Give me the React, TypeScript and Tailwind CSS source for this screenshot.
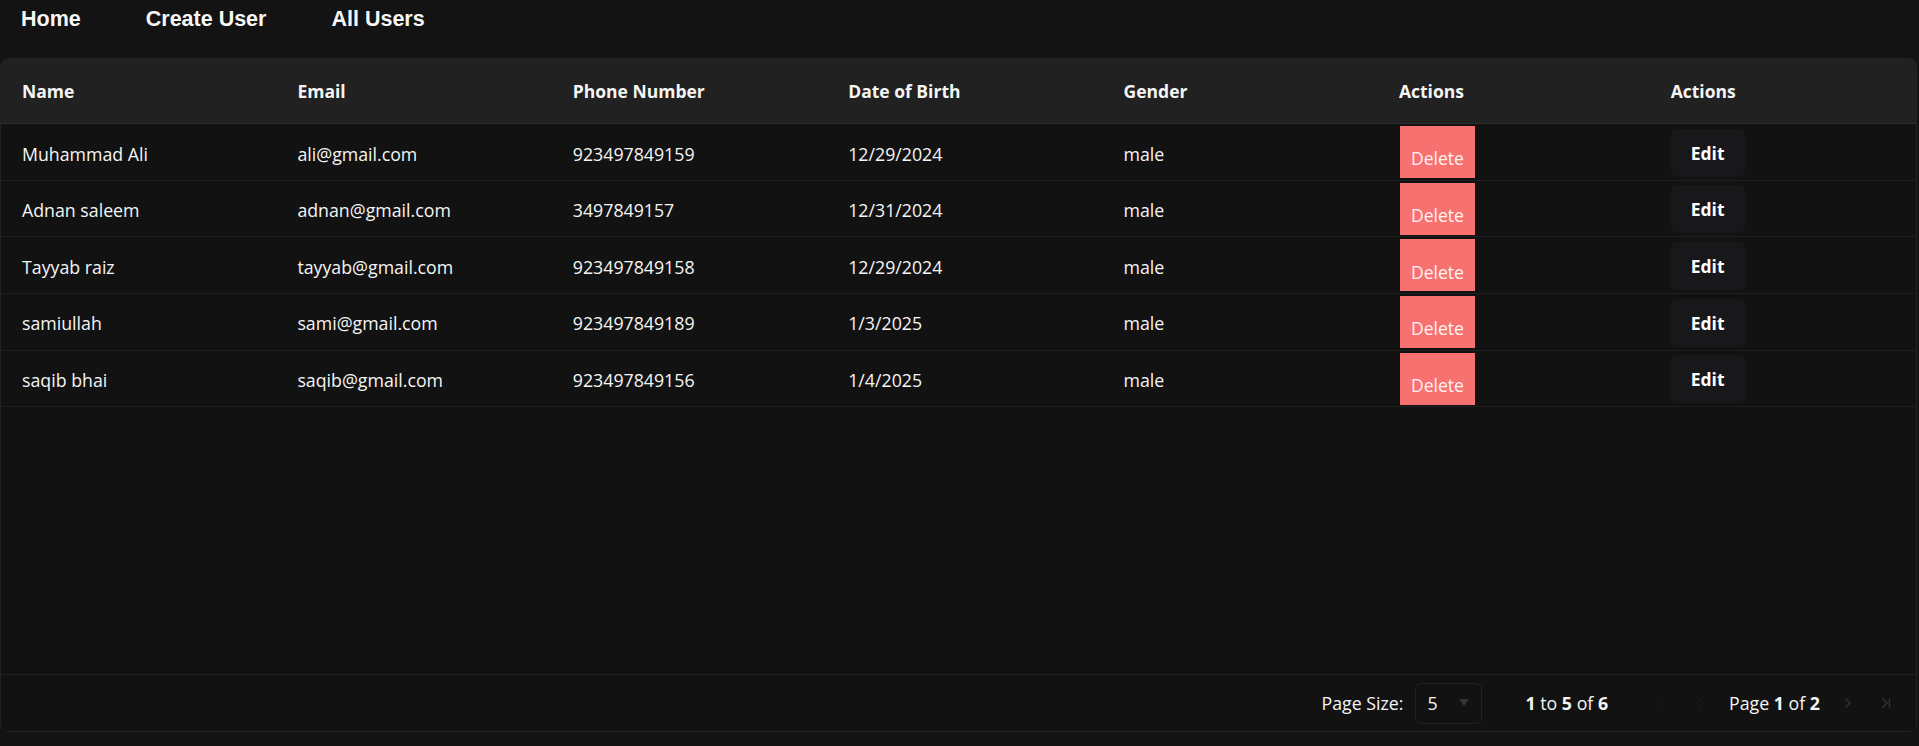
import React from "react";

interface User {
  name: string;
  email: string;
  phone: string;
  dob: string;
  gender: string;
}

const users: User[] = [
  { name: "Muhammad Ali", email: "ali@gmail.com", phone: "923497849159", dob: "12/29/2024", gender: "male" },
  { name: "Adnan saleem", email: "adnan@gmail.com", phone: "3497849157", dob: "12/31/2024", gender: "male" },
  { name: "Tayyab raiz", email: "tayyab@gmail.com", phone: "923497849158", dob: "12/29/2024", gender: "male" },
  { name: "samiullah", email: "sami@gmail.com", phone: "923497849189", dob: "1/3/2025", gender: "male" },
  { name: "saqib bhai", email: "saqib@gmail.com", phone: "923497849156", dob: "1/4/2025", gender: "male" },
];

const headers = ["Name", "Email", "Phone Number", "Date of Birth", "Gender", "Actions", "Actions"];

const cols = "grid grid-cols-[275.4px_275.4px_275.4px_275.4px_275.4px_271.7px_1fr]";

const Chevron = ({ dir, bar, color }: { dir: "left" | "right"; bar?: boolean; color: string }) => (
  <svg width="16" height="16" viewBox="0 0 16 16" fill="none" stroke={color} strokeWidth="1.6">
    {dir === "right" ? <path d="M5.5 3.5 10 8l-4.5 4.5" /> : <path d="M10.5 3.5 6 8l4.5 4.5" />}
    {bar && (dir === "right" ? <path d="M12.5 3.5v9" /> : <path d="M3.5 3.5v9" />)}
  </svg>
);

const App: React.FC = () => {
  return (
    <div className="min-h-[746px] bg-[#131313] text-white">
      <nav className="h-[58px] pt-[7px] pl-[21px] flex gap-[65px] font-['Liberation_Sans',Arial,sans-serif] font-bold text-[21.5px] leading-[24px] text-[#f7f7f7]">
        <a href="#">Home</a>
        <a href="#">Create User</a>
        <a href="#">All Users</a>
      </nav>

      <div className="w-[1917px] h-[674px] flex flex-col rounded-[8px] border border-[#222222] overflow-hidden font-['Open_Sans',sans-serif] text-[17.75px] text-[#f5f5f5]">
        <div className={`${cols} h-[65px] shrink-0 bg-[#212121] border-b border-[#2c2c2c] items-center font-bold text-[17.5px]`}>
          {headers.map((h, i) => (
            <div key={i} className="pl-[21px]">
              {h}
            </div>
          ))}
        </div>

        <div className="flex-1 bg-[#121212]">
          {users.map((u, i) => (
            <div key={i} className={`${cols} h-[56.67px] border-b border-[#1e1e1e] items-center`}>
              <div className="pl-[21px] pt-[4px]">{u.name}</div>
              <div className="pl-[21px] pt-[4px]">{u.email}</div>
              <div className="pl-[21px] pt-[4px]">{u.phone}</div>
              <div className="pl-[21px] pt-[4px]">{u.dob}</div>
              <div className="pl-[21px] pt-[4px]">{u.gender}</div>
              <div className="pl-[22px] self-start pt-[2px]">
                <button className="w-[75px] h-[52px] bg-[#f87171] text-[#fff3f3] text-[17.5px] flex items-center justify-center pt-[14px] leading-none">
                  Delete
                </button>
              </div>
              <div className="pl-[21px] pt-[2px]">
                <button className="w-[74px] h-[48px] rounded-[6px] bg-[#18181b] font-bold text-white text-[17.5px]">
                  Edit
                </button>
              </div>
            </div>
          ))}
        </div>

        <div className="h-[57px] shrink-0 border-t border-[#222222] bg-[#121212] flex items-center justify-end pr-[23px]">
          <span>Page Size:</span>
          <div className="ml-[12px] w-[67px] h-[41px] rounded-[6px] border border-[#232323] flex items-center pl-[11px]">
            <span>5</span>
            <svg className="ml-[21px]" width="10" height="8" viewBox="0 0 10 8">
              <path d="M0 0h10L5 7z" fill="#353535" />
            </svg>
          </div>
          <span className="ml-[43px]">
            <b>1</b> to <b>5</b> of <b>6</b>
          </span>
          <div className="ml-[45px]">
            <Chevron dir="left" bar color="#171717" />
          </div>
          <div className="ml-[22px]">
            <Chevron dir="left" color="#191919" />
          </div>
          <span className="ml-[22px]">
            Page <b>1</b> of <b>2</b>
          </span>
          <div className="ml-[20px]">
            <Chevron dir="right" color="#303030" />
          </div>
          <div className="ml-[21px]">
            <Chevron dir="right" bar color="#303030" />
          </div>
        </div>
      </div>
    </div>
  );
};

export default App;
